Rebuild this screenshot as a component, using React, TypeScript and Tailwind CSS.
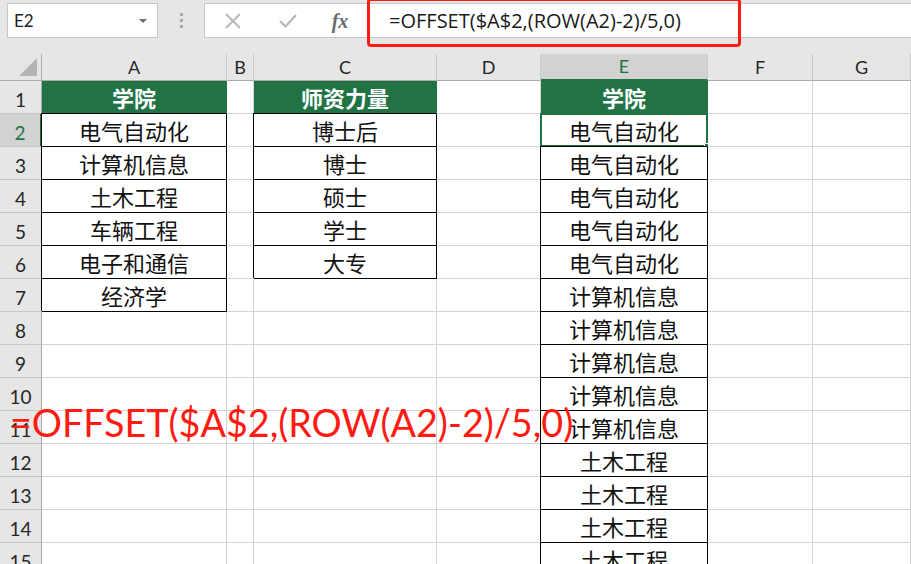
import React from "react"

const cols = ["A", "B", "C", "D", "E", "F", "G"]

const colA = ["学院", "电气自动化", "计算机信息", "土木工程", "车辆工程", "电子和通信", "经济学"]
const colC = ["师资力量", "博士后", "博士", "硕士", "学士", "大专"]
const colE = [
  "学院",
  "电气自动化", "电气自动化", "电气自动化", "电气自动化", "电气自动化",
  "计算机信息", "计算机信息", "计算机信息", "计算机信息", "计算机信息",
  "土木工程", "土木工程", "土木工程", "土木工程",
]

const cjk = { fontFamily: '"Noto Sans CJK SC", "Noto Sans", sans-serif' }
const latin = { fontFamily: 'Lato, "Open Sans", sans-serif' }

function cellText(col: number, row: number): string | undefined {
  if (col === 0) return colA[row]
  if (col === 2) return colC[row]
  if (col === 4) return colE[row]
  return undefined
}

function Cell({ col, row }: { col: number; row: number }) {
  const text = cellText(col, row)
  const header = row === 0 && text !== undefined
  const boxed = !header && text !== undefined
  const selected = col === 4 && row === 1

  let cls = "relative flex items-center justify-center border-r border-b text-[22px] leading-none "
  if (header) {
    cls += "bg-[#217346] text-white font-bold border-[#217346]"
  } else if (boxed) {
    cls += "bg-white text-[#111] border-black shadow-[-1px_-1px_0_0_#000]"
  } else {
    cls += "bg-white border-[#d4d4d4]"
  }

  return (
    <div className={cls} style={cjk}>
      <span className="-mt-[1px]">{text}</span>
      {selected && (
        <>
          <div className="absolute -left-[1px] -top-[1px] -right-[1px] -bottom-[1px] border-2 border-[#217346]" />
          <div className="absolute -right-[4px] -bottom-[4px] w-[7px] h-[7px] bg-[#217346] border border-white" />
        </>
      )}
    </div>
  )
}

function TopBar() {
  return (
    <div className="relative h-[54px] bg-[#e6e6e6] flex items-start pt-[3px]">
      {/* name box */}
      <div className="ml-[7px] w-[151px] h-[35px] bg-white border border-[#c6c6c6] flex items-center justify-between pl-[6px] pr-[10px]">
        <span className="text-[17px] text-[#222]" style={latin}>E2</span>
        <div className="w-0 h-0 border-l-[4px] border-r-[4px] border-t-[4px] border-l-transparent border-r-transparent border-t-[#6b6b6b]" />
      </div>
      {/* dots */}
      <div className="w-[46px] h-[35px] flex flex-col items-center justify-center gap-[3px]">
        <div className="w-[3px] h-[3px] bg-[#a6a6a6]" />
        <div className="w-[3px] h-[3px] bg-[#a6a6a6]" />
        <div className="w-[3px] h-[3px] bg-[#a6a6a6]" />
      </div>
      {/* formula bar */}
      <div className="flex-1 h-[35px] bg-white border border-r-0 border-[#c6c6c6] flex items-center">
        <div className="w-[55px] flex justify-center">
          <svg width="20" height="20" viewBox="0 0 20 20">
            <path d="M3 3 L17 17 M17 3 L3 17" stroke="#b8b8b8" strokeWidth="1.8" fill="none" />
          </svg>
        </div>
        <div className="w-[55px] flex justify-center">
          <svg width="20" height="20" viewBox="0 0 20 20">
            <path d="M2 10 L7.5 15.5 L18 4" stroke="#b8b8b8" strokeWidth="2.2" fill="none" />
          </svg>
        </div>
        <div className="w-[50px] flex justify-center">
          <span
            className="italic text-[20px] text-[#6b6b6b] font-bold leading-none"
            style={{ fontFamily: '"Liberation Serif", serif' }}
          >
            fx
          </span>
        </div>
        <div className="ml-[24px] text-[20px] text-[#1a1a1a] leading-none" style={{ fontFamily: '"Open Sans", sans-serif' }}>
          =OFFSET($A$2,(ROW(A2)-2)/5,0)
        </div>
      </div>
      {/* red highlight frame */}
      <div className="absolute left-[367px] top-[-2px] w-[374px] h-[49px] border-[3px] border-[#ff1a12] rounded-[4px]" />
    </div>
  )
}

export default function App() {
  const rows = Array.from({ length: 15 }, (_, i) => i)

  return (
    <div className="relative w-[911px] h-[564px] overflow-hidden bg-white">
      <TopBar />

      <div className="grid grid-cols-[42px_185px_27px_183px_104px_167px_105px_98px] grid-rows-[27px] auto-rows-[33px]">
        {/* column header row */}
        <div className="relative bg-[#e6e6e6] border-r border-b border-[#ababab]">
          <svg width="18" height="18" viewBox="0 0 18 18" className="absolute right-[4px] bottom-[4px]">
            <path d="M18 0 L18 18 L0 18 Z" fill="#b4b4b4" />
          </svg>
        </div>
        {cols.map((c, i) => (
          <div
            key={c}
            className={
              i === 4
                ? "flex items-center justify-center bg-[#d2d2d2] text-[#217346] border-r border-[#c8c8c8] border-b-2 border-b-[#217346] text-[18px]"
                : "flex items-center justify-center bg-[#e6e6e6] text-[#262626] border-r border-[#c8c8c8] border-b border-b-[#ababab] text-[18px]"
            }
            style={latin}
          >
            {c}
          </div>
        ))}

        {rows.map((r) => (
          <React.Fragment key={r}>
            <div
              className={
                r === 1
                  ? "flex items-center justify-center bg-[#d2d2d2] text-[#217346] border-r-2 border-r-[#217346] border-b border-b-[#c8c8c8] text-[19px]"
                  : "flex items-center justify-center bg-[#e6e6e6] text-[#262626] border-r border-r-[#ababab] border-b border-b-[#c8c8c8] text-[19px]"
              }
              style={latin}
            >
              <span className="mt-[6px]">{r + 1}</span>
            </div>
            {cols.map((_, c) => (
              <Cell key={c} col={c} row={r} />
            ))}
          </React.Fragment>
        ))}
      </div>

      {/* red formula callout */}
      <div
        className="absolute left-[10px] top-[404px] text-[37.7px] text-[#ff1a12] leading-none whitespace-nowrap"
        style={latin}
      >
        =OFFSET($A$2,(ROW(A2)-2)/5,0)
      </div>
    </div>
  )
}
